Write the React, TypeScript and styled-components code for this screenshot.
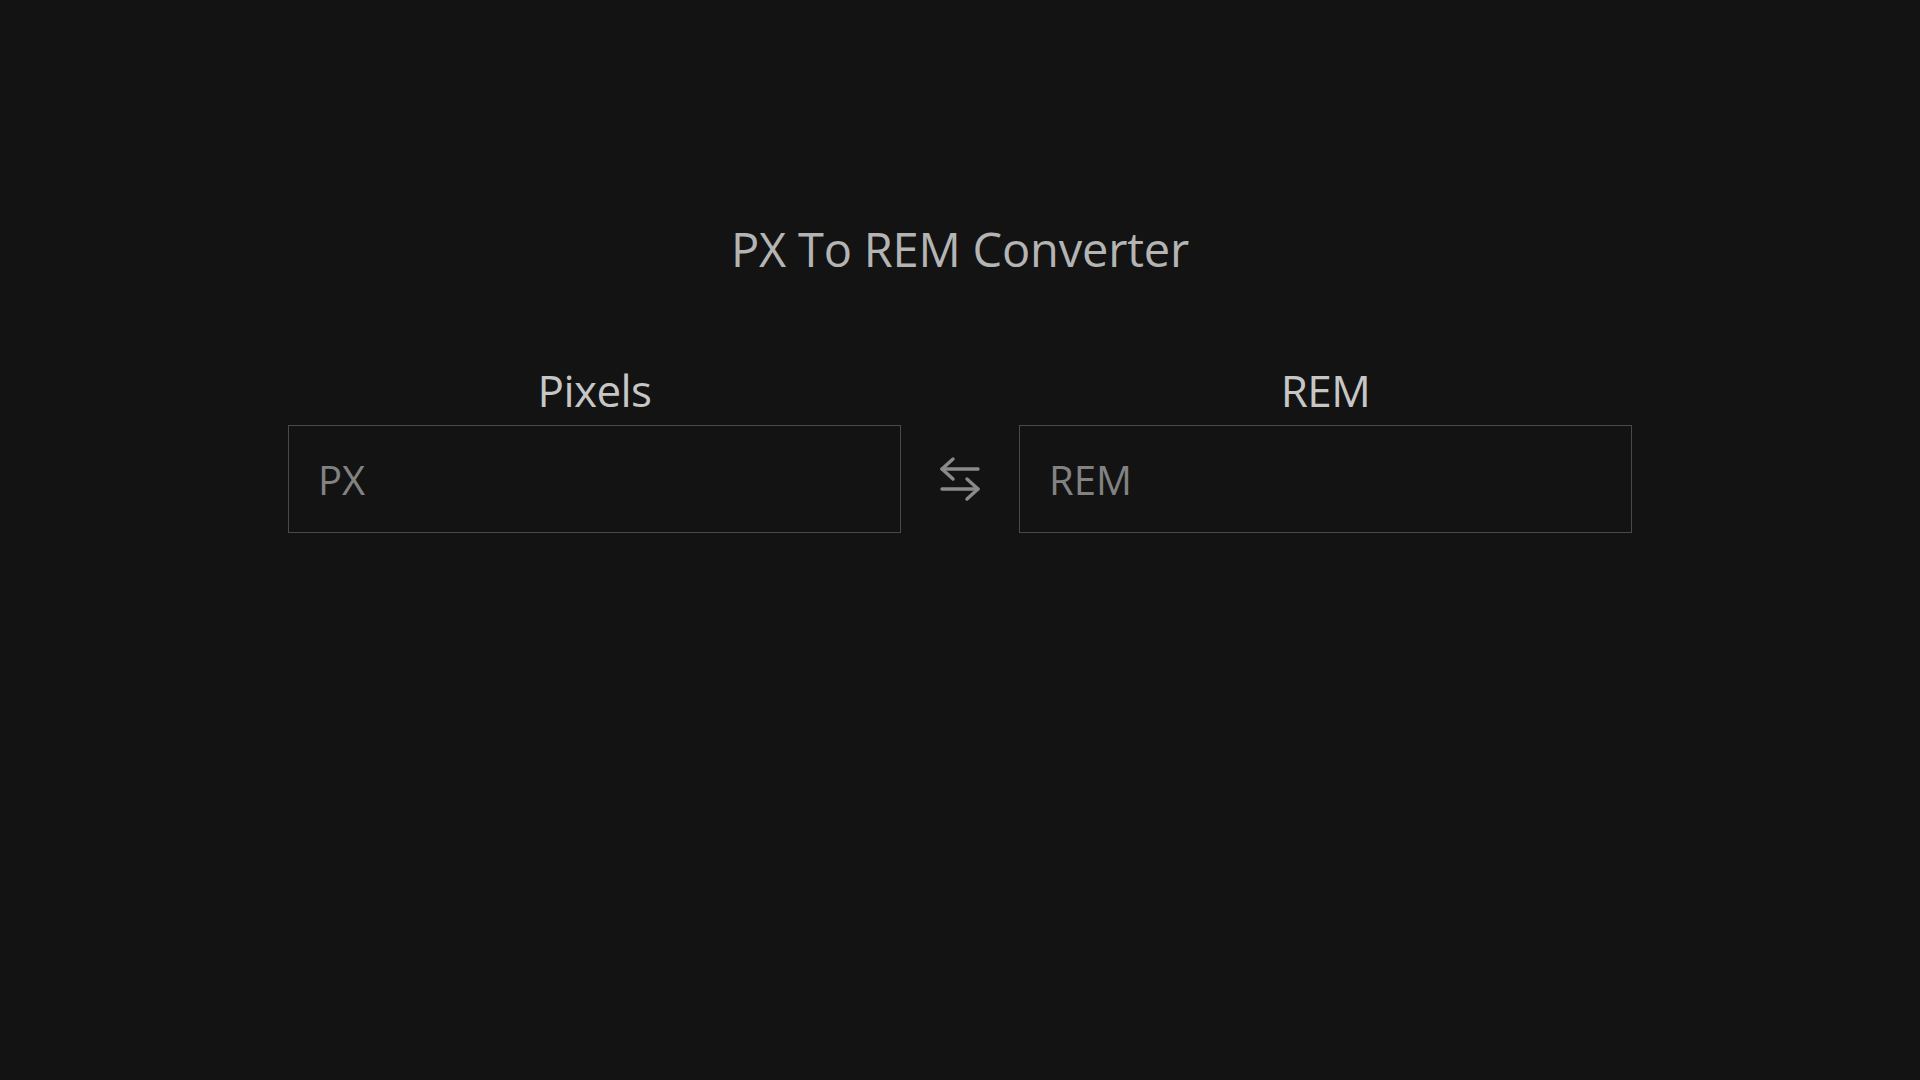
import React, { useState } from "react";
import styled, { createGlobalStyle } from "styled-components";

const Global = createGlobalStyle`
  html, body { margin: 0; padding: 0; background: #131313; }
  body { font-family: "Open Sans", "Noto Sans", sans-serif; }
  * { box-sizing: border-box; }
`;

const Page = styled.main`
  min-height: 100vh;
  display: flex;
  flex-direction: column;
  align-items: center;
  padding-top: 217px;
`;

const Title = styled.h1`
  margin: 0;
  font-size: 47px;
  line-height: 64px;
  font-weight: 400;
  color: #b4b4b4;
  letter-spacing: -0.2px;
`;

const Row = styled.div`
  margin-top: 81px;
  width: 1344px;
  display: flex;
  align-items: flex-end;
`;

const Column = styled.div`
  flex: 0 0 613px;
  display: flex;
  flex-direction: column;
  align-items: stretch;
  gap: 7px;
`;

const Label = styled.label`
  text-align: center;
  font-size: 44px;
  line-height: 56px;
  color: #c6c6c6;
  letter-spacing: -0.6px;
`;

const Input = styled.input`
  height: 108px;
  width: 100%;
  background: #131313;
  border: 1px solid #4a4a4a;
  padding: 0 29px;
  font-family: inherit;
  font-size: 40px;
  color: #d0d0d0;
  outline: none;
  &::placeholder { color: #828282; }
`;

const Swap = styled.button`
  flex: 1;
  height: 108px;
  background: transparent;
  border: none;
  padding: 0;
  display: flex;
  align-items: center;
  justify-content: center;
  cursor: pointer;
`;

export default function App() {
  const [px, setPx] = useState("");
  const [rem, setRem] = useState("");
  return (
    <Page>
      <Global />
      <Title>PX To REM Converter</Title>
      <Row>
        <Column>
          <Label>Pixels</Label>
          <Input placeholder="PX" value={px} onChange={(e) => setPx(e.target.value)} />
        </Column>
        <Swap aria-label="swap" onClick={() => { setPx(rem); setRem(px); }}>
          <svg width="42" height="46" viewBox="0 0 42 46" fill="none" stroke="#8a8a8a" strokeWidth="3.4" strokeLinecap="round" strokeLinejoin="round">
            <path d="M3 13H39" />
            <path d="M14 3L3 13L14 23" />
            <path d="M3 33H39" />
            <path d="M28 23L39 33L28 43" />
          </svg>
        </Swap>
        <Column>
          <Label>REM</Label>
          <Input placeholder="REM" value={rem} onChange={(e) => setRem(e.target.value)} />
        </Column>
      </Row>
    </Page>
  );
}
